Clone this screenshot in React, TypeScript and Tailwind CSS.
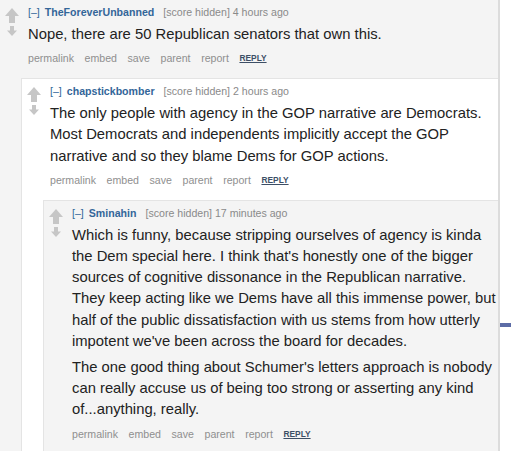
import type { ReactNode } from "react"

type CommentProps = {
  author: string
  time: string
  paragraphs: string[]
  bg: string
  className?: string
  children?: ReactNode
}

function Arrows() {
  return (
    <div className="ml-[5px] w-[14px] shrink-0 pt-[8px] flex flex-col items-center">
      <svg width="14" height="15" viewBox="0 0 14 15">
        <polygon points="7,0 14,8 10,8 10,15 4,15 4,8 0,8" fill="#c6c6c6" />
      </svg>
      <svg className="mt-[3px]" width="10" height="10" viewBox="0 0 10 10">
        <polygon points="3,0 7,0 7,4.5 10,4.5 5,10 0,4.5 3,4.5" fill="#c6c6c6" />
      </svg>
    </div>
  )
}

function Comment({ author, time, paragraphs, bg, className = "", children }: CommentProps) {
  return (
    <div className={`${bg} border-l border-t border-[#e4e4e4] ${className}`}>
      <div className="flex">
        <Arrows />
        <div className="ml-[9px] flex-1 min-w-0 pt-[4px] pb-[12px]">
          {/* tagline */}
          <div className="flex items-center text-[10.6px] leading-[16px]">
            <span className="text-[#369]">[–]</span>
            <span className="ml-[5px] font-bold text-[#369]">{author}</span>
            <span className="ml-[9px] text-[#8a8a8a]">[score hidden] {time}</span>
          </div>
          <div className="mt-[4px] text-[14.8px] leading-[21.2px] text-[#222]">
            {paragraphs.map((p, i) => (
              <p key={i} className={i > 0 ? "mt-[5px]" : ""}>
                {p}
              </p>
            ))}
          </div>
          {/* buttons */}
          <div className="mt-[5px] flex items-center gap-[10.6px] text-[10.6px] leading-[16px] text-[#8f8f8f]">
            <span>permalink</span>
            <span>embed</span>
            <span>save</span>
            <span>parent</span>
            <span>report</span>
            <span className="text-[8.4px] font-bold uppercase underline text-[#3d4f66]">reply</span>
          </div>
        </div>
      </div>
      {children && <div className="ml-[21px]">{children}</div>}
    </div>
  )
}

export default function App() {
  return (
    <div className="h-screen w-full overflow-hidden bg-white flex font-['Liberation_Sans',Arial,sans-serif]">
      <Comment
        className="-ml-px -mt-px w-[501px] shrink-0 min-h-[460px] border-r-2 border-r-[#dcdcdc]"
        bg="bg-[#f4f4f4]"
        author="TheForeverUnbanned"
        time="4 hours ago"
        paragraphs={["Nope, there are 50 Republican senators that own this."]}
      >
        <Comment
          bg="bg-white"
          author="chapstickbomber"
          time="2 hours ago"
          paragraphs={[
            "The only people with agency in the GOP narrative are Democrats. Most Democrats and independents implicitly accept the GOP narrative and so they blame Dems for GOP actions.",
          ]}
        >
          <Comment
            bg="bg-[#f4f4f4]"
            author="Sminahin"
            time="17 minutes ago"
            paragraphs={[
              "Which is funny, because stripping ourselves of agency is kinda the Dem special here. I think that's honestly one of the bigger sources of cognitive dissonance in the Republican narrative. They keep acting like we Dems have all this immense power, but half of the public dissatisfaction with us stems from how utterly impotent we've been across the board for decades.",
              "The one good thing about Schumer's letters approach is nobody can really accuse us of being too strong or asserting any kind of...anything, really.",
            ]}
          />
        </Comment>
      </Comment>
      <div className="flex-1">
        <div className="mt-[323px] h-[4px] bg-[#5c6ca6]" />
      </div>
    </div>
  )
}
